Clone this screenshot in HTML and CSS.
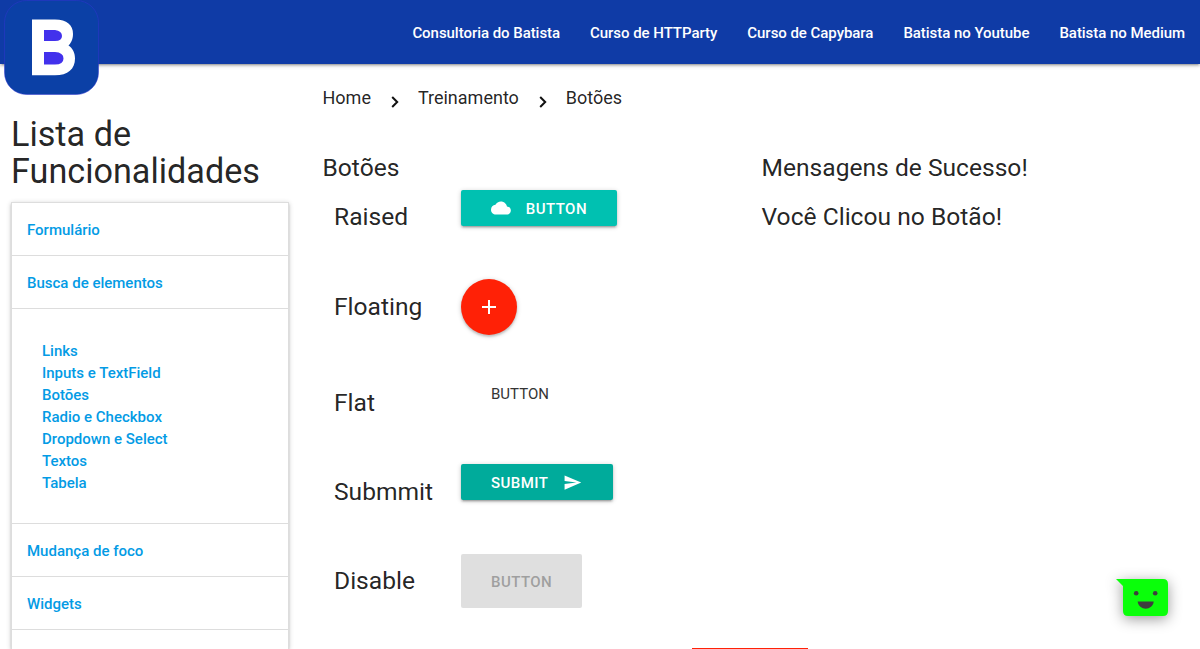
FILE: index.html
```
<!DOCTYPE html>
<html lang="pt-BR">
<head>
<meta charset="utf-8">
<title>Botões</title>
<link rel="stylesheet" href="styles.css">
</head>
<body>
<nav class="topbar">
  <svg class="logo" width="96" height="96" viewBox="0 0 96 96" aria-label="Batista">
    <rect x="1.500" y=".5" width="94" height="94" rx="22" fill="#0b40a6" stroke="#3034d0" stroke-width=".5"/>
    <path d="M29 19.500H52C64 19.500 70 25 70 34C70 40 67.500 43.500 65.500 45.500C69.500 48 72 52.500 72 58.500C72 69 65 75.300 52 75.300H29Z" fill="#fff"/>
    <path d="M41 30H52Q59 31 59 36Q59 41 52 41H41ZM41 52H52Q60.500 52.500 60.500 58.500Q60.500 64.500 52 64.500H41Z" fill="#4231ec"/>
  </svg>
  <ul class="menu">
    <li>Consultoria do Batista</li>
    <li>Curso de HTTParty</li>
    <li>Curso de Capybara</li>
    <li>Batista no Youtube</li>
    <li>Batista no Medium</li>
  </ul>
</nav>
<div class="layout">
  <aside class="sidebar">
    <h4 class="side-title">Lista de Funcionalidades</h4>
    <ul class="collapsible">
      <li class="entry">Formulário</li>
      <li class="entry">Busca de elementos</li>
      <li class="submenu">
        <a>Links</a><a>Inputs e TextField</a><a>Botões</a><a>Radio e Checkbox</a><a>Dropdown e Select</a><a>Textos</a><a>Tabela</a>
      </li>
      <li class="entry">Mudança de foco</li>
      <li class="entry">Widgets</li>
    </ul>
  </aside>
  <main class="content">
    <div class="crumbs">
      <span>Home</span>
      <svg class="chevron" width="8" height="12" viewBox="0 0 8 12"><path d="M1.200 1L6.200 6L1.200 11" fill="none" stroke="#111" stroke-width="2"/></svg>
      <span>Treinamento</span>
      <svg class="chevron" width="8" height="12" viewBox="0 0 8 12"><path d="M1.200 1L6.200 6L1.200 11" fill="none" stroke="#111" stroke-width="2"/></svg>
      <span>Botões</span>
    </div>
    <div class="columns">
      <section>
        <h5 class="heading">Botões</h5>
        <div class="row raised"><h5 class="label">Raised</h5>
          <button class="btn teal"><svg width="20" height="20" viewBox="0 0 24 24" fill="#fff"><path d="M19.350 10.040C18.670 6.590 15.640 4 12 4 9.110 4 6.600 5.640 5.350 8.040 2.340 8.360 0 10.910 0 14c0 3.310 2.690 6 6 6h13c2.760 0 5-2.240 5-5 0-2.640-2.050-4.780-4.650-4.960z"/></svg><span class="btn-text">Button</span></button></div>
        <div class="row floating"><h5 class="label">Floating</h5>
          <button class="btn-floating"><svg width="24" height="24" viewBox="0 0 24 24" fill="#fff"><path d="M19 13h-6v6h-2v-6H5v-2h6V5h2v6h6v2z"/></svg></button></div>
        <div class="row flat"><h5 class="label">Flat</h5><button class="btn-flat">Button</button></div>
        <div class="row submit"><h5 class="label">Submmit</h5>
          <button class="btn green"><span class="btn-text">Submit</span><svg width="19" height="19" viewBox="0 0 24 24" fill="#fff"><path d="M2.010 21L23 12 2.010 3 2 10l15 2-15 2z"/></svg></button></div>
        <div class="row"><h5 class="label">Disable</h5><button class="btn-disabled" disabled>Button</button></div>
      </section>
      <section>
        <h5 class="heading">Mensagens de Sucesso!</h5>
        <h5 class="heading message">Você Clicou no Botão!</h5>
      </section>
    </div>
  </main>
</div>
<div class="next-button"></div>
<svg class="chat" width="54" height="42" viewBox="0 0 54 42">
  <path d="M0 1H47Q52 1 52 6V33Q52 38 47 38H12Q7 38 7 33V8Z" fill="#0aff0a"/>
  <circle cx="20.200" cy="15.200" r="2.300" fill="#3e3e3e"/><circle cx="39.200" cy="15.200" r="2.300" fill="#3e3e3e"/>
  <path d="M21.700 23.500H37.700C37 33 22.400 33 21.700 23.500Z" fill="#3e3e3e"/>
</svg>
</body>
</html>
```
FILE: styles.css
```
* { box-sizing: border-box; }
body { margin: 0; height: 649px; overflow: hidden; background: #fff; font: 15px/22px Roboto, sans-serif; color: rgba(0,0,0,.87); }
h4, h5, ul { margin: 0; padding: 0; font-weight: 400; list-style: none; }
button { border: 0; margin: 0; font-family: Roboto, sans-serif; text-transform: uppercase; }
.topbar { height: 64px; background: #0f3ba6; box-shadow: 0 2px 2px rgba(0,0,0,.14), 0 3px 1px -2px rgba(0,0,0,.12), 0 1px 5px rgba(0,0,0,.2); display: flex; justify-content: space-between; padding: 0 15px 0 3px; color: #fff; }
.logo { flex: none; }
.menu { display: flex; gap: 30px; line-height: 66px; font-weight: 500; font-size: 15px; letter-spacing: -.045px; white-space: nowrap; }
.layout { display: grid; grid-template-columns: 278px 1fr; gap: 33.500px; padding-left: 11px; }
.side-title { font-size: 34.200px; line-height: 37px; margin-top: 52px; }
.collapsible { margin-top: 12px; border: 1px solid #ddd; border-bottom: 0; height: 447px; margin-bottom: -1px; box-shadow: 0 2px 2px rgba(0,0,0,.14), 0 3px 1px -2px rgba(0,0,0,.12), 0 1px 5px rgba(0,0,0,.2); color: #039be5; font-weight: 500; clip-path: inset(-5px -6px 0); }
.entry { height: 53px; padding: 0 15px; line-height: 54px; border-bottom: 1px solid #ddd; }
.submenu { height: 215px; padding: 31px 30px; border-bottom: 1px solid #ddd; display: flex; flex-direction: column; }
.crumbs { height: 64px; display: flex; font-size: 18px; line-height: 67px; }
.chevron { margin: 32px 19px 0 20px; }
.columns { display: grid; grid-template-columns: 439px 1fr; padding-top: 26px; }
.heading, .label { font-size: 24.600px; line-height: 27px; }
.message { margin-top: 22px; }
.row { display: grid; grid-template-columns: 127px auto; justify-content: start; align-items: start; margin-left: 11.500px; }
.label { padding-top: 13px; }
.raised { height: 89px; margin-top: 9px; }
.floating { height: 97px; }
.flat { height: 88px; }
.submit { height: 90px; }
.floating .label, .submit .label { padding-top: 14px; }
.btn { height: 36px; padding: 0 30px; border-radius: 2px; display: flex; align-items: center; color: #fff; font-size: 15px; font-weight: 500; letter-spacing: .45px; box-shadow: 0 2px 2px rgba(0,0,0,.14), 0 3px 1px -2px rgba(0,0,0,.12), 0 1px 5px rgba(0,0,0,.2); }
.teal { background: #00c1b1; gap: 15px; width: 156px; }
.green { background: #00ab9b; gap: 15px; width: 152px; }
.btn-text { padding-top: 1px; }
.btn-floating { width: 56px; height: 56px; border-radius: 50%; background: #ff2106; padding: 16px; box-shadow: 0 2px 2px rgba(0,0,0,.14), 0 1px 5px rgba(0,0,0,.2); }
.btn-floating svg { display: block; }
.btn-flat { height: 36px; padding: 0 30px; background: transparent; color: #343434; font-size: 15px; }
.btn-disabled { width: 121px; height: 54px; padding: 1px 0 0 30px; text-align: left; border-radius: 2px; background: #dfdfdf; color: #9f9f9f; font-size: 15px; font-weight: 500; letter-spacing: .45px; }
.next-button { position: absolute; left: 692px; top: 648px; width: 116px; height: 1px; background: #ff2106; }
.chat { position: absolute; left: 1116px; top: 578px; overflow: visible; filter: drop-shadow(0 3px 7px rgba(0,0,0,.4)); }
```
